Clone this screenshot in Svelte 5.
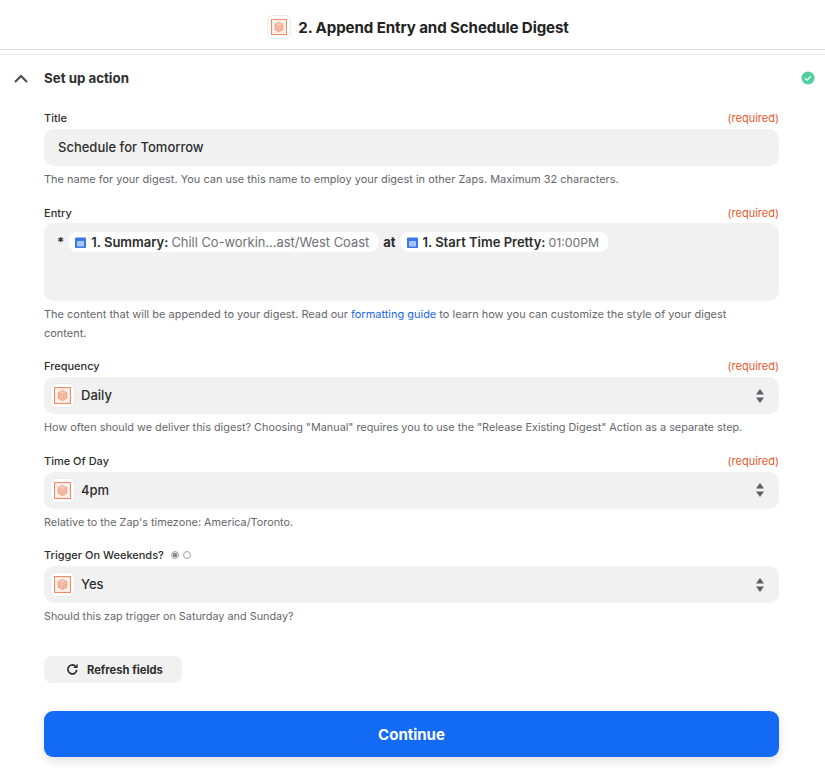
<script>
  const fields = [
    { label: 'Frequency', value: 'Daily', help: 'How often should we deliver this digest? Choosing "Manual" requires you to use the "Release Existing Digest" Action as a separate step.', required: true },
    { label: 'Time Of Day', value: '4pm', help: "Relative to the Zap's timezone: America/Toronto.", required: true },
    { label: 'Trigger On Weekends?', value: 'Yes', help: 'Should this zap trigger on Saturday and Sunday?', required: false, radios: true }
  ];
</script>

{#snippet digest()}
  <svg class="logo-s" viewBox="0 0 18 18">
    <rect x="0.6" y="0.6" width="16.8" height="16.8" fill="#fdf1ec" stroke="#f0875f" stroke-width="1.100"/>
    <path d="M9 3.500 13.500 6v6L9 14.500 4.500 12V6Z" fill="#f9cdbb"/>
    <path d="M4.500 6 9 8.300 13.500 6 M4.500 8.300 9 10.600 13.500 8.300 M4.500 10.500 9 12.800 13.500 10.500 M9 3.500 13.500 6v6L9 14.500 4.500 12V6Z" fill="none" stroke="#ef8a66" stroke-width="0.700"/>
  </svg>
{/snippet}

{#snippet cal()}
  <svg class="cal" viewBox="0 0 11 11" width="11" height="11">
    <rect x="0" y="0.5" width="11" height="10.500" rx="1" fill="#3b78e7"/>
    <rect x="2" y="4" width="7" height="5.500" fill="#a9c5f5"/>
  </svg>
{/snippet}

<div class="page">
  <header class="top">
    <span class="logo-box">{@render digest()}</span>
    <h1>2. Append Entry and Schedule Digest</h1>
  </header>
  <div class="rule"></div>

  <section class="setup">
    <div class="setup-head">
      <svg class="chev" viewBox="0 0 14 9" width="14" height="9"><path d="M1 8 7 2l6 6" fill="none" stroke="#4a4a4f" stroke-width="2"/></svg>
      <span class="setup-title">Set up action</span>
      <svg class="ok" viewBox="0 0 14 14" width="14" height="14"><circle cx="7" cy="7" r="6.500" fill="#4fcf9f"/><path d="M4 7.200 6.200 9.300 10 5" fill="none" stroke="#e8fff5" stroke-width="1.300"/></svg>
    </div>

    <div class="form">
      <div class="field first">
        <div class="label-row"><span class="label">Title</span><span class="req">(required)</span></div>
        <div class="input text">Schedule for Tomorrow</div>
        <p class="help">The name for your digest. You can use this name to employ your digest in other Zaps. Maximum 32 characters.</p>
      </div>

      <div class="field entry">
        <div class="label-row"><span class="label">Entry</span><span class="req">(required)</span></div>
        <div class="input area">
          <span class="plain star">*</span>
          <span class="pill">{@render cal()}<b>1. Summary:</b><span class="val">Chill Co-workin...ast/West Coast</span></span>
          <span class="plain">at</span>
          <span class="pill">{@render cal()}<b>1. Start Time Pretty:</b><span class="val time">01:00PM</span></span>
        </div>
        <p class="help">The content that will be appended to your digest. Read our <a href="#guide">formatting guide</a> to learn how you can customize the style of your digest content.</p>
      </div>

      {#each fields as f}
        <div class="field select-field">
          <div class="label-row">
            <span class="label">{f.label}</span>
            {#if f.radios}
              <span class="radios"><i class="radio on"></i><i class="radio"></i></span>
            {/if}
            {#if f.required}<span class="req">(required)</span>{/if}
          </div>
          <div class="input select">
            <span class="logo-box small">{@render digest()}</span>
            <span class="sel-val">{f.value}</span>
            <svg class="updown" viewBox="0 0 8 14" width="8" height="14"><path d="M4 0 8 5.500H0Z M4 14 0 8.500h8Z" fill="#5f5f64"/></svg>
          </div>
          <p class="help">{f.help}</p>
        </div>
      {/each}

      <button class="refresh">
        <svg viewBox="0 0 14 14" width="13" height="13"><path d="M11.600 7.500A4.800 4.800 0 1 1 10 3.300" fill="none" stroke="#2d2e2e" stroke-width="1.800"/><path d="M12.500 0.800V5.500H7.800Z" fill="#2d2e2e"/></svg>
        Refresh fields
      </button>

      <button class="continue">Continue</button>
    </div>
  </section>
</div>

<style>
  :global(body) { margin: 0; background: #fff; }
  .page {
    width: 825px; height: 779px; overflow: hidden; background: #fff;
    font-family: Inter, "Noto Sans", sans-serif; color: #2d2e2e;
  }
  .top {
    height: 50px; display: flex; align-items: center; justify-content: center; gap: 7px;
    padding: 5px 0 0 11px; box-sizing: border-box; border-bottom: 1px solid #dcdde0;
  }
  h1 { margin: 0; font-size: 15.1px; font-weight: 650; color: #222; letter-spacing: -0.1px; }
  .rule { height: 3px; background: #fff; border-bottom: 1px solid #e6e7ea; margin-top: 1px; }
  .logo-box {
    width: 24px; height: 24px; box-sizing: border-box; padding: 3px; display: block;
    border: 1px solid #e9ebef; border-radius: 6px; background: #fff;
  }
  .logo-box.small { width: 25px; height: 25px; flex: none; }
  .logo-s { display: block; width: 100%; height: 100%; }
  .setup-head { display: flex; align-items: center; height: 46px; padding: 0 10px 0 14px; }
  .chev { margin-right: 16px; }
  .setup-title { font-size: 13.3px; font-weight: 650; color: #2d2e2e; flex: 1; }
  .form { padding: 0 46px 0 44px; }
  .field.first { margin-top: 10px; padding-bottom: 17px; }
  .field.first .label-row { margin-bottom: 4px; }
  .label-row { display: flex; align-items: center; height: 14px; margin-bottom: 3px; }
  .label { font-size: 11px; font-weight: 550; color: #2d2e2e; }
  .req { margin-left: auto; font-size: 11px; color: #e8582d; }
  .input { background: #f1f1f1; border-radius: 10px; box-sizing: border-box; }
  .text { height: 37px; padding: 0 14px 2px; display: flex; align-items: center; font-size: 13px; font-weight: 550; color: #2d2e2e; }
  .help { margin: 4px 0 0; max-width: 710px; font-size: 10.97px; line-height: 19px; color: #66676b; }
  .select-field .help { font-size: 10.85px; }
  .help a { color: #1a66e8; text-decoration: none; }
  .entry { padding-bottom: 16px; }
  .area { height: 78px; padding: 9px 13px; display: flex; align-items: flex-start; gap: 5px; font-size: 13px; }
  .plain { font-weight: 650; line-height: 20px; }
  .pill {
    display: inline-flex; align-items: center; height: 20px; padding: 0 9px 0 6px;
    background: #fff; border-radius: 8px; font-size: 13px; white-space: nowrap;
  }
  .pill b { font-weight: 640; margin-right: 3px; }
  .cal { margin-right: 5px; flex: none; }
  .val { color: #6f7074; font-size: 12.9px; }
  .val.time { font-size: 12.3px; }
  .select-field { height: 94.5px; }
  .select-field .label-row { margin-bottom: 4px; }
  .select { height: 37px; display: flex; align-items: center; padding: 0 15px 0 6px; }
  .sel-val { font-size: 13px; font-weight: 550; margin-left: 6px; flex: 1; padding-bottom: 1px; }
  .radios { display: inline-flex; gap: 4px; margin-left: 7px; }
  .radio { width: 8px; height: 8px; border-radius: 50%; box-sizing: border-box; border: 1px solid #a5a5a8; background: #fff; display: block; }
  .radio.on { background: radial-gradient(circle, #8a8a8e 0 2px, #e8e8e8 2.500px); }
  button { font-family: inherit; border: 0; cursor: pointer; }
  .refresh {
    display: flex; align-items: center; gap: 8px; height: 27px; width: 138px;
    margin-top: 13.5px; padding: 0 0 0 22px; box-sizing: border-box;
    background: #f1f1f1; border-radius: 8px; font-size: 11.2px; font-weight: 650; color: #2d2e2e;
  }
  .continue {
    display: block; width: 735px; height: 46px; margin-top: 28px;
    background: #136bf5; color: #fff; border-radius: 9px; font-size: 15px; font-weight: 650;
    box-shadow: 0 4px 10px rgba(0,0,0,0.12);
  }
</style>
